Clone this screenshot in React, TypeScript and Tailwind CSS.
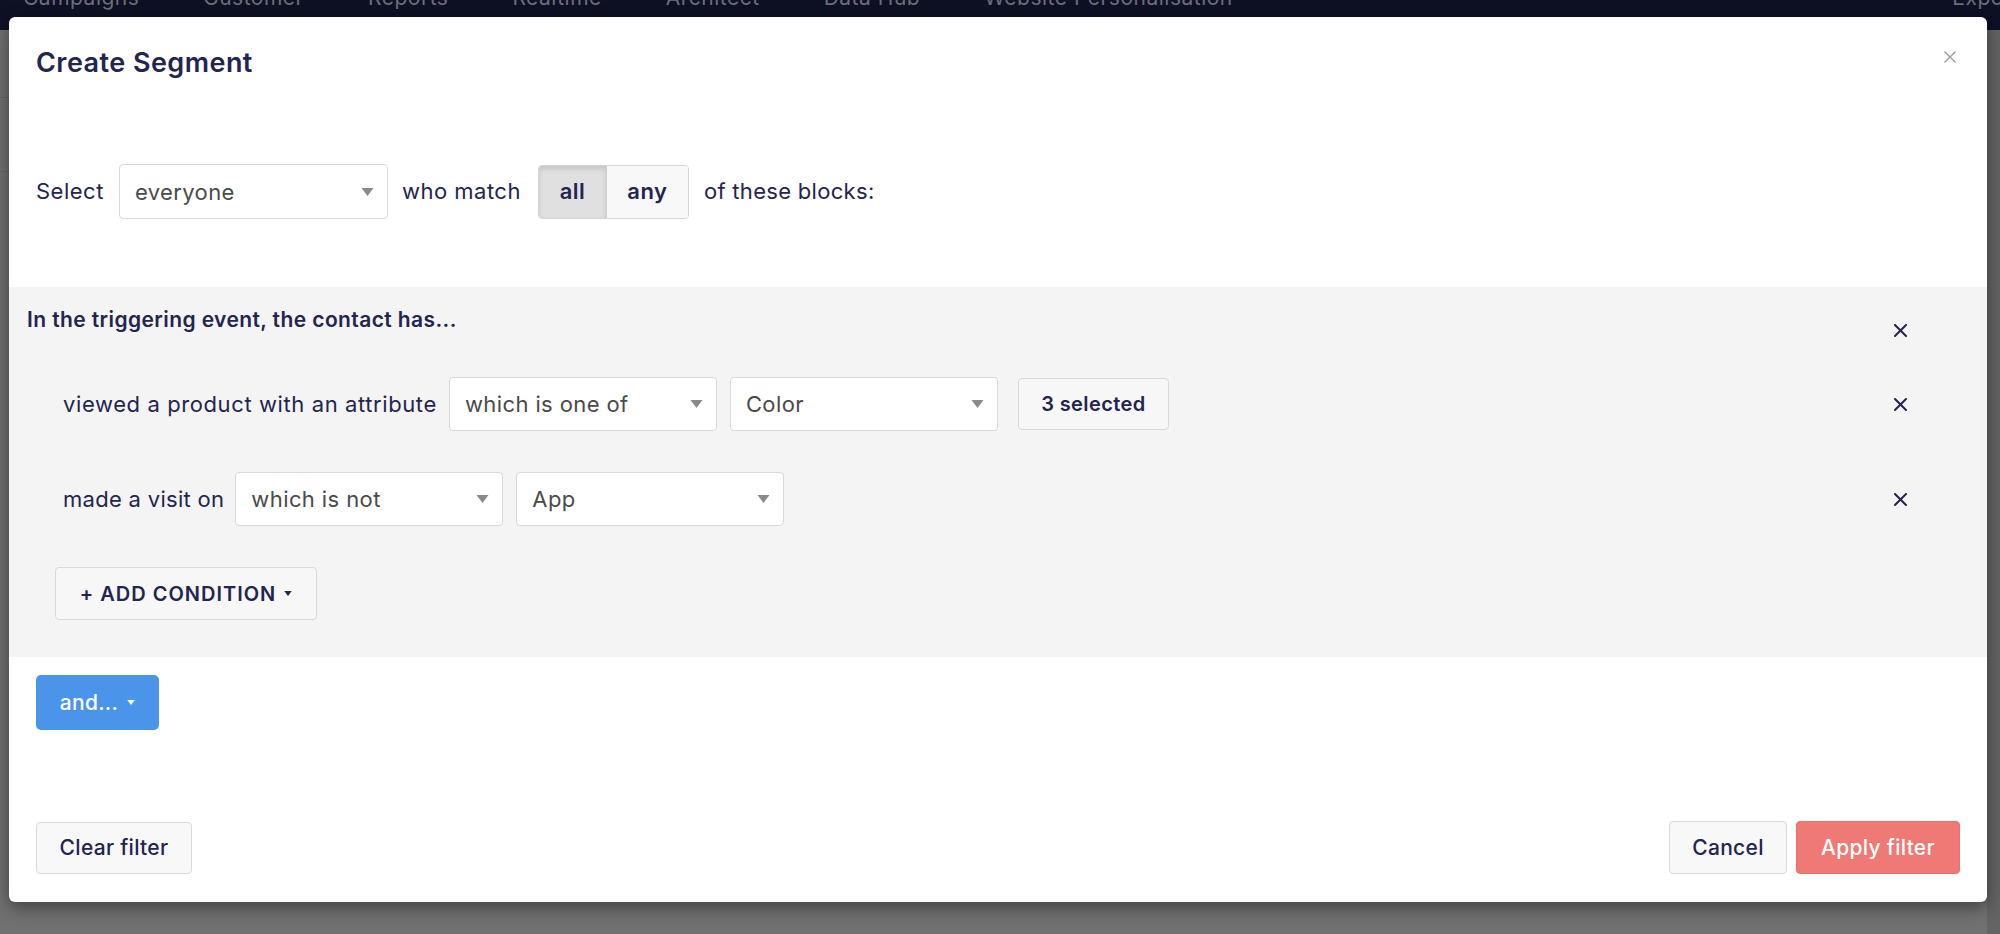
import React from "react";

function Caret({ color = "#8a8a8a", w = 13, h = 8 }: { color?: string; w?: number; h?: number }) {
  return (
    <svg width={w} height={h} viewBox="0 0 12 8" className="shrink-0">
      <path d="M0 0H12L6 8Z" fill={color} />
    </svg>
  );
}

function XIcon({ color = "#23244f", size = 13, stroke = 2 }: { color?: string; size?: number; stroke?: number }) {
  return (
    <svg width={size} height={size} viewBox="0 0 13 13" className="shrink-0">
      <path d="M1 1L12 12M12 1L1 12" stroke={color} strokeWidth={stroke} strokeLinecap="square" />
    </svg>
  );
}

function SelectBox({ value, w = "w-[268px] h-[54px]" }: { value: string; w?: string }) {
  return (
    <div
      className={`flex ${w} shrink-0 items-center justify-between rounded-[4px] border border-[#d9d9d9] bg-white pl-[15px] pr-[13px]`}
    >
      <span className="text-[22px] leading-none tracking-[0.4px] text-[#4a4a4a]">{value}</span>
      <Caret />
    </div>
  );
}

export default function App() {
  const navItems = [
    "Campaigns",
    "Customer",
    "Reports",
    "Realtime",
    "Architect",
    "Data Hub",
    "Website Personalisation",
  ];
  return (
    <div className="relative h-[934px] w-[2000px] overflow-hidden bg-[#717171] font-['Inter',sans-serif]">
      {/* top navigation (behind overlay) */}
      <nav className="flex h-[30px] items-start gap-[64px] bg-[#0e1024] pl-[23px] text-[21px] leading-[20px] tracking-[0.5px] text-[#6c6e7c]">
        {navItems.map((n) => (
          <span key={n} className="-mt-[12px]">
            {n}
          </span>
        ))}
        <span className="-mt-[12px] ml-auto mr-[-20px]">Export</span>
      </nav>
      {/* page remnants behind overlay */}
      <div className="h-[68px] border-b border-[#666]" />
      <div className="h-[74px] border-b border-[#666]" />
      <div className="absolute right-0 top-[30px] h-[904px] w-[13px] bg-[#646464]" />

      {/* modal */}
      <div className="absolute left-[9px] top-[17px] flex h-[885px] w-[1978px] flex-col rounded-[6px] bg-white shadow-[0_5px_18px_rgba(0,0,0,0.45)]">
        {/* header */}
        <div className="flex items-start justify-between pl-[27px] pr-[31px] pt-[30px]">
          <h2 className="text-[27px] font-semibold leading-[32px] tracking-[0.45px] text-[#23244f]">Create Segment</h2>
          <div className="mt-[4px]">
            <XIcon color="#9a9a9a" size={12} stroke={1.4} />
          </div>
        </div>

        {/* select row */}
        <div className="mt-[85px] flex h-[55px] items-center pl-[27px] text-[22px] tracking-[0.5px] text-[#23244f]">
          <span>Select</span>
          <div className="ml-[15px]">
            <SelectBox value="everyone" w="w-[269px] h-[55px]" />
          </div>
          <span className="ml-[14px]">who match</span>
          <div className="ml-[17px] flex h-[54px] overflow-hidden rounded-[4px] border border-[#d4d4d4]">
            <div className="flex w-[68px] items-center justify-center border-r border-[#cfcfcf] bg-[#e0e0e0] font-semibold shadow-[inset_0_3px_5px_rgba(0,0,0,0.12)]">
              all
            </div>
            <div className="flex w-[81px] items-center justify-center bg-[#f8f8f8] font-semibold">any</div>
          </div>
          <span className="ml-[15px] tracking-[0.3px]">of these blocks:</span>
        </div>

        {/* grey block */}
        <div className="mt-[68px] flex h-[370px] flex-col bg-[#f4f4f4] text-[#23244f]">
          <div className="flex items-start justify-between pl-[18px] pr-[80px] pt-[20px]">
            <span className="text-[21px] font-semibold leading-[26px] tracking-[0.4px]">
              In the triggering event, the contact has...
            </span>
            <div className="mt-[17px]">
              <XIcon />
            </div>
          </div>

          <div className="mt-[40px] flex h-[54px] items-center pl-[54px] pr-[80px] text-[22px] tracking-[0.6px]">
            <span>viewed a product with an attribute</span>
            <div className="ml-[12px]">
              <SelectBox value="which is one of" />
            </div>
            <div className="ml-[13px]">
              <SelectBox value="Color" />
            </div>
            <div className="ml-[20px] flex h-[52px] w-[151px] items-center justify-center rounded-[4px] border border-[#d9d9d9] bg-[#f7f7f7] text-[20px] font-semibold tracking-[0.4px]">
              3 selected
            </div>
            <div className="ml-auto">
              <XIcon />
            </div>
          </div>

          <div className="mt-[41px] flex h-[54px] items-center pl-[54px] pr-[80px] text-[22px] tracking-[0.3px]">
            <span>made a visit on</span>
            <div className="ml-[11px]">
              <SelectBox value="which is not" />
            </div>
            <div className="ml-[13px]">
              <SelectBox value="App" />
            </div>
            <div className="ml-auto">
              <XIcon />
            </div>
          </div>

          <div className="ml-[46px] mt-[41px] flex h-[53px] w-[262px] items-center justify-center gap-[8px] rounded-[4px] border border-[#d9d9d9] bg-[#f7f7f7] text-[20px] font-semibold tracking-[1px]">
            <span>+ ADD CONDITION</span>
            <Caret color="#23244f" w={8} h={5} />
          </div>
        </div>

        {/* and button */}
        <div className="ml-[27px] mt-[18px] flex h-[55px] w-[123px] items-center justify-center gap-[9px] rounded-[5px] bg-[#4a95ea] text-[21px] font-medium tracking-[0.3px] text-white">
          <span>and...</span>
          <Caret color="#ffffff" w={8} h={5} />
        </div>

        {/* footer */}
        <div className="mt-auto flex items-center justify-between px-[27px] pb-[28px] text-[21px] font-medium tracking-[0.3px]">
          <div className="flex h-[52px] w-[156px] items-center justify-center rounded-[4px] border border-[#d9d9d9] bg-[#f8f8f8] text-[#23244f]">
            Clear filter
          </div>
          <div className="flex gap-[9px]">
            <div className="flex h-[53px] w-[118px] items-center justify-center rounded-[4px] border border-[#d9d9d9] bg-[#f8f8f8] text-[#23244f]">
              Cancel
            </div>
            <div className="flex h-[53px] w-[164px] items-center justify-center rounded-[4px] border border-[#e8716c] bg-[#ef7974] text-white">
              Apply filter
            </div>
          </div>
        </div>
      </div>
    </div>
  );
}
